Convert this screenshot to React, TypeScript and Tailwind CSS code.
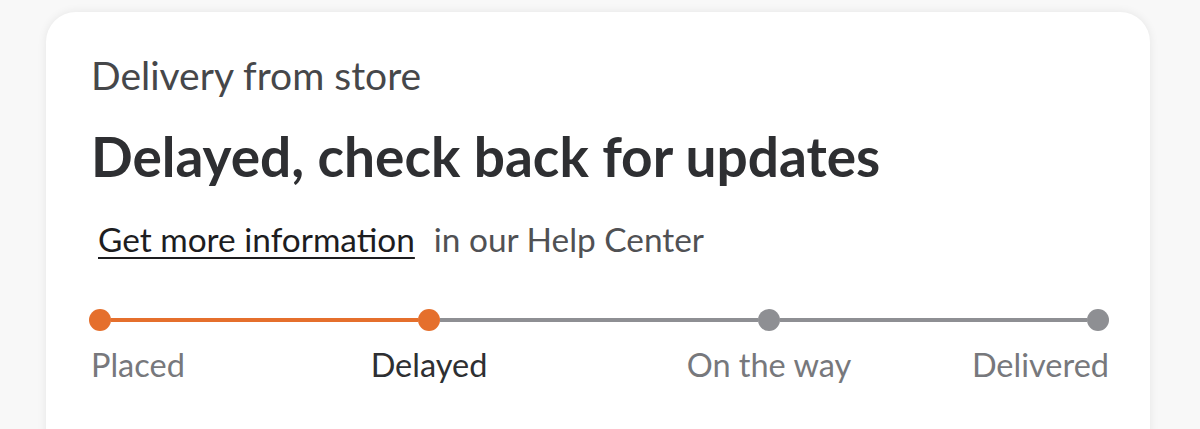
import React from "react";

type Stop = { label: string; done: boolean; current?: boolean };

const stops: Stop[] = [
  { label: "Placed", done: true },
  { label: "Delayed", done: true, current: true },
  { label: "On the way", done: false },
  { label: "Delivered", done: false },
];

const ORANGE = "bg-[#e56f2c]";
const GRAY = "bg-[#8e8f93]";

function Dot({ done }: { done: boolean }) {
  return <div className={`h-[22px] w-[22px] shrink-0 rounded-full ${done ? ORANGE : GRAY}`} />;
}

function Segment({ done, width }: { done: boolean; width: string }) {
  return <div className={`h-[4px] ${width} ${done ? ORANGE : GRAY}`} />;
}

function Tracker() {
  return (
    <div className="ml-[-2px] w-[1020px]">
      <div className="flex items-center">
        <Dot done />
        <Segment done width="w-[307px]" />
        <Dot done />
        <Segment done={false} width="w-[318px]" />
        <Dot done={false} />
        <Segment done={false} width="w-[307px]" />
        <Dot done={false} />
      </div>
      <div className="mt-[18px] flex text-[32.5px] leading-none">
        <div className="w-[220px] pl-[2px] text-[#77787c]">{stops[0].label}</div>
        <div className="w-[240px] text-center text-[#2e2f32]">{stops[1].label}</div>
        <div className="ml-[100px] w-[240px] text-center text-[#77787c]">{stops[2].label}</div>
        <div className="flex-1 text-right text-[#77787c]">{stops[3].label}</div>
      </div>
    </div>
  );
}

export default function App() {
  return (
    <div
      className="h-[429px] w-[1200px] overflow-hidden bg-[#f8f8f8] pt-[12px] pl-[46px]"
      style={{ fontFamily: "Lato, 'Open Sans', sans-serif" }}
    >
      <div className="h-[480px] w-[1104px] rounded-[30px] bg-white px-[45px] pt-[44px] shadow-[0_0_10px_rgba(0,0,0,0.08)]">
        <p className="text-[39px] leading-none text-[#46474a]">Delivery from store</p>
        <h1 className="mt-[34px] text-[55px] font-bold leading-none text-[#2e2f32]">
          Delayed, check back for updates
        </h1>
        <p className="mt-[39px] pl-[7px] text-[33.4px] leading-none text-[#505154]">
          <a className="text-[#1d1d1f] underline decoration-2 underline-offset-[5px]" href="#">
            Get more information
          </a>
          <span className="ml-[19px]">in our Help Center</span>
        </p>
        <div className="mt-[53px]">
          <Tracker />
        </div>
      </div>
    </div>
  );
}
